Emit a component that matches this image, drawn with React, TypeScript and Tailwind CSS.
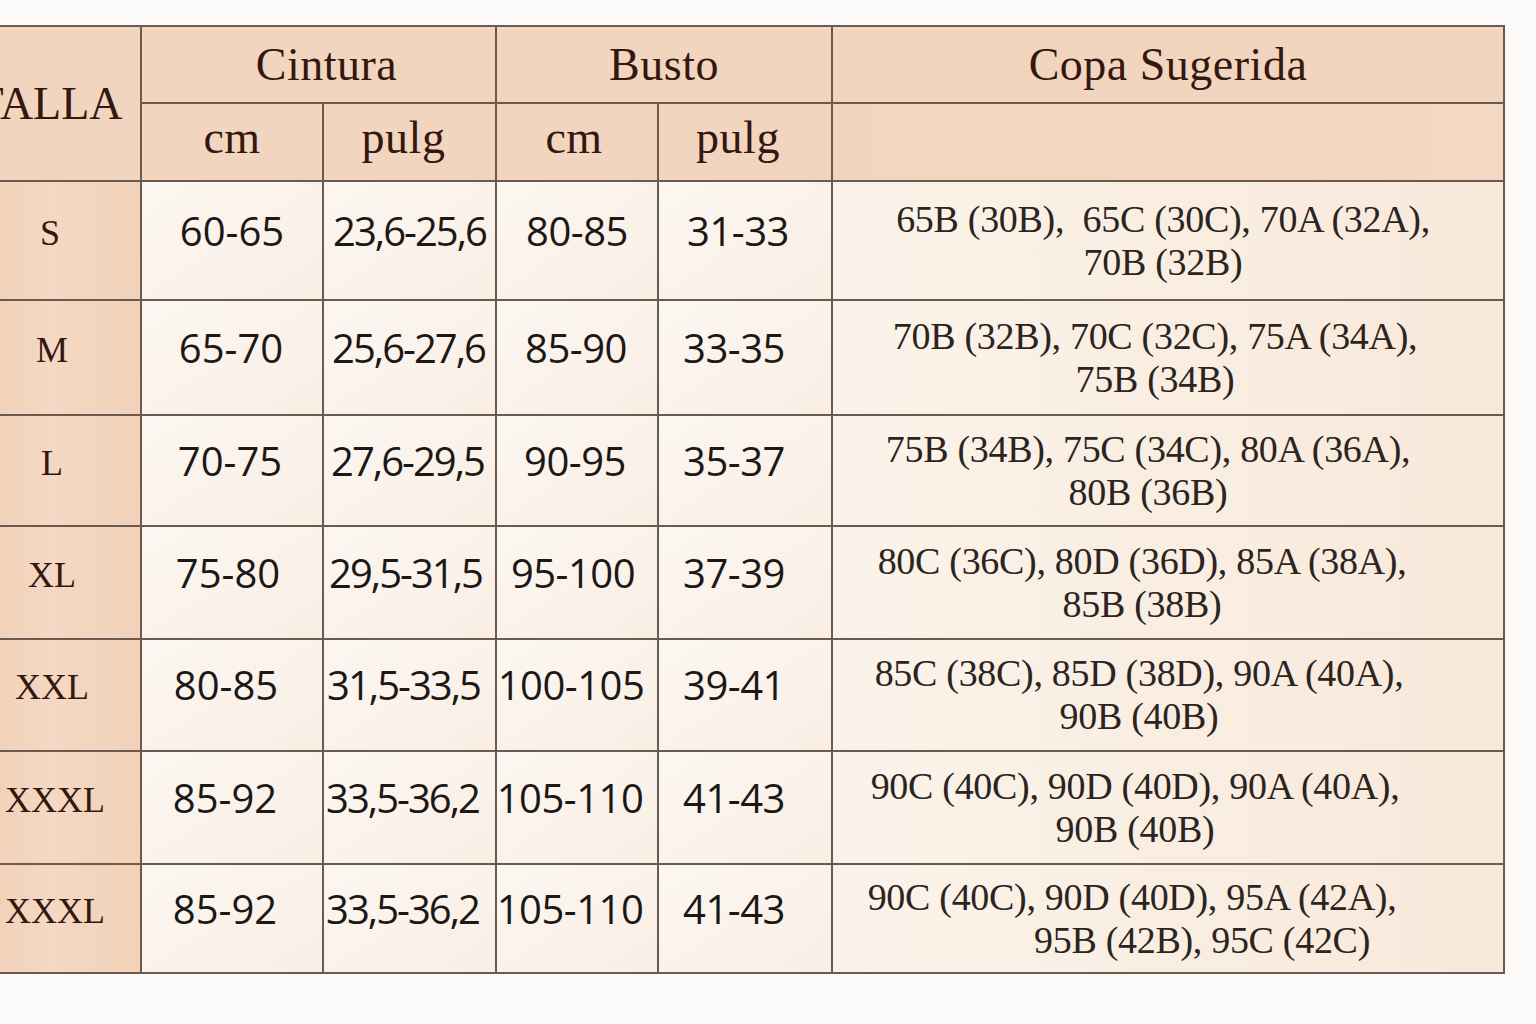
const serif = "font-['Liberation_Serif','Times_New_Roman',serif]";
const sans = "font-['Open_Sans','Noto_Sans',sans-serif]";

type Row = { size: string; c1: string; c2: string; b1: string; b2: string; cup: [string, string]; shift: string; cupShift: string };

const rows: Row[] = [
  { size: "S", c1: "60-65", c2: "23,6-25,6", b1: "80-85", b2: "31-33", cup: ["65B (30B),  65C (30C), 70A (32A),", "70B (32B)"], shift: "pr-0", cupShift: "pr-[10px]" },
  { size: "M", c1: "65-70", c2: "25,6-27,6", b1: "85-90", b2: "33-35", cup: ["70B (32B), 70C (32C), 75A (34A),", "75B (34B)"], shift: "pr-[2px]", cupShift: "pr-[26px]" },
  { size: "L", c1: "70-75", c2: "27,6-29,5", b1: "90-95", b2: "35-37", cup: ["75B (34B), 75C (34C), 80A (36A),", "80B (36B)"], shift: "pr-[4px]", cupShift: "pr-[40px]" },
  { size: "XL", c1: "75-80", c2: "29,5-31,5", b1: "95-100", b2: "37-39", cup: ["80C (36C), 80D (36D), 85A (38A),", "85B (38B)"], shift: "pr-[8px]", cupShift: "pr-[52px]" },
  { size: "XXL", c1: "80-85", c2: "31,5-33,5", b1: "100-105", b2: "39-41", cup: ["85C (38C), 85D (38D), 90A (40A),", "90B (40B)"], shift: "pr-[12px]", cupShift: "pr-[58px]" },
  { size: "XXXL", c1: "85-92", c2: "33,5-36,2", b1: "105-110", b2: "41-43", cup: ["90C (40C), 90D (40D), 90A (40A),", "90B (40B)"], shift: "pr-[14px]", cupShift: "pr-[66px]" },
  { size: "XXXL", c1: "85-92", c2: "33,5-36,2", b1: "105-110", b2: "41-43", cup: ["90C (40C), 90D (40D), 95A (42A),", "95B (42B), 95C (42C)"], shift: "pr-[14px]", cupShift: "pr-[72px]" },
];

function Head({ children, className = "" }: { children?: React.ReactNode; className?: string }) {
  return (
    <div className={`bg-[#f2d5bf] flex items-center justify-center text-[46px] tracking-[0.5px] text-[#341810] leading-none ${serif} ${className}`}>
      {children}
    </div>
  );
}

function Num({ children, className = "" }: { children: React.ReactNode; className?: string }) {
  return (
    <div className={`bg-gradient-to-br from-[#fcf7f2] to-[#f9eee4] flex items-center justify-center pb-5 text-[40px] text-[#1c1816] leading-none whitespace-nowrap ${sans} ${className}`}>
      {children}
    </div>
  );
}

export default function App() {
  return (
    <div className="w-[1536px] h-[1024px] bg-[#fdfbfa] overflow-hidden">
      <div className="-ml-[42px] mt-[25px] w-max grid grid-cols-[180px_180px_171px_160px_172px_670px] grid-rows-[75px_76px_117px_113px_109px_111px_110px_111px_107px] gap-[2px] p-[2px] bg-[#6a5a50]">
        <Head className="row-span-2 pr-[2px] text-[40px] tracking-normal">TALLA</Head>
        <Head className="col-span-2 pl-[16px]">Cintura</Head>
        <Head className="col-span-2">Busto</Head>
        <Head>Copa Sugerida</Head>
        <Head className="pb-2">cm</Head>
        <Head className="pb-2 pr-[12px]">pulg</Head>
        <Head className="pb-2 pr-[6px]">cm</Head>
        <Head className="pb-2 pr-[14px]">pulg</Head>
        <Head className="bg-gradient-to-r from-[#f2d5bf] to-[#f3d8c3]" />

        {rows.map((r, i) => (
          <div key={i} className="contents">
            <div className={`bg-gradient-to-r from-[#f1cdb0] via-[#f4d8c3] to-[#f2d2b8] flex items-center justify-center pb-4 text-[36px] text-[#341810] leading-none ${serif} ${i >= 5 ? "pl-[10px]" : i > 0 ? "pl-[4px]" : ""}`}>
              {r.size}
            </div>
            <Num className={r.shift}>{r.c1}</Num>
            <Num className={`tracking-[-2px] ${r.shift}`}>{r.c2}</Num>
            <Num className={`tracking-[-0.5px] ${r.shift}`}>{r.b1}</Num>
            <Num className={`tracking-[-0.5px] ${r.shift === "pr-0" ? "pr-[14px]" : "pr-[22px]"}`}>{r.b2}</Num>
            <div className={`bg-gradient-to-r from-[#fbf3ea] to-[#f8e8da] flex flex-col items-center justify-center text-[38px] tracking-[-0.3px] text-[#2b2420] leading-[43px] whitespace-pre ${serif} ${r.cupShift}`}>
              <span>{r.cup[0]}</span>
              <span className={i === 6 ? "pl-[140px]" : ""}>{r.cup[1]}</span>
            </div>
          </div>
        ))}
      </div>
    </div>
  );
}
